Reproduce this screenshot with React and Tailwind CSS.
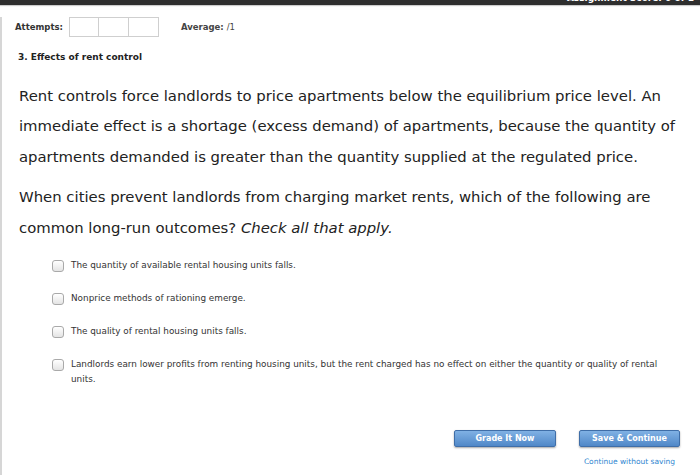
import { useState } from 'react'

const options = [
  'The quantity of available rental housing units falls.',
  'Nonprice methods of rationing emerge.',
  'The quality of rental housing units falls.',
  'Landlords earn lower profits from renting housing units, but the rent charged has no effect on either the quantity or quality of rental units.',
]

const btn = "h-[17px] rounded-[2px] border border-[#3f6ea8] bg-gradient-to-b from-[#80b1e4] to-[#5088c8] text-white text-[8px] font-bold shadow-[0_1px_2px_rgba(0,0,0,0.35)] flex items-center justify-center"

function Option({ text, checked, onToggle }) {
  return (
    <label className="flex items-start gap-[7px] cursor-pointer">
      <span
        onClick={onToggle}
        className="mt-[2px] w-[12px] h-[12px] shrink-0 rounded-[3px] border border-[#a9a9a9] bg-gradient-to-b from-white to-[#e4e4e4] flex items-center justify-center text-[9px] leading-none text-[#333]"
      >
        {checked ? '✓' : ''}
      </span>
      <span className="text-[8.85px] leading-[15px] text-[#333]">{text}</span>
    </label>
  )
}

export default function App() {
  const [checked, setChecked] = useState([false, false, false, false])
  const toggle = i => setChecked(c => c.map((v, j) => (j === i ? !v : v)))

  return (
    <div className="w-[700px] h-[475px] bg-white overflow-hidden font-['DejaVu_Sans',Verdana,sans-serif]">
      {/* top strip, mostly scrolled off */}
      <div className="h-[5px] bg-[#2e2e2e] flex justify-end overflow-hidden shadow-[0_1px_1px_rgba(0,0,0,0.2)]">
        <span className="text-white text-[9px] font-bold pr-[6px] -mt-[8px] leading-[12px]">Assignment Score: 0 of 1</span>
      </div>

      <div className="h-[470px] border-l-2 border-[#d6d6d6] pl-[13px] pr-[10px]">
        {/* attempts row */}
        <div className="flex items-center h-[20px] mt-[12px]">
          <span className="text-[8.5px] font-bold text-[#333]">Attempts:</span>
          <div className="flex ml-[6px]">
            <div className="w-[30px] h-[20px] border border-[#cfcfcf]" />
            <div className="w-[30px] h-[20px] border border-l-0 border-[#cfcfcf]" />
            <div className="w-[30px] h-[20px] border border-l-0 border-[#cfcfcf]" />
          </div>
          <span className="ml-[22px] text-[8.5px] font-bold text-[#444]">
            Average: <span className="font-normal">/1</span>
          </span>
        </div>

        <div className="mt-[14px] ml-[3px] text-[9px] font-bold text-[#222]">3. Effects of rent control</div>

        <div className="ml-[4px] text-[14.85px] leading-[30.5px] text-[#222]">
          <p className="mt-[16px]">
            Rent controls force landlords to price apartments below the equilibrium price level. An immediate effect is a
            shortage (excess demand) of apartments, because the quantity of apartments demanded is greater than the
            quantity supplied at the regulated price.
          </p>
          <p className="mt-[10px]">
            When cities prevent landlords from charging market rents, which of the following are common long-run
            outcomes? <i>Check all that apply.</i>
          </p>
        </div>

        <div className="ml-[37px] mt-[15px] w-[620px] flex flex-col gap-[18px]">
          {options.map((o, i) => (
            <Option key={i} text={o} checked={checked[i]} onToggle={() => toggle(i)} />
          ))}
        </div>

        <div className="flex justify-end gap-[23px] mt-[43px] pr-[10px]">
          <button className={`${btn} w-[102px]`}>Grade It Now</button>
          <div className="flex flex-col items-center">
            <button className={`${btn} w-[101px]`}>Save &amp; Continue</button>
            <a className="mt-[9px] text-[7.5px] text-[#2f86d0]">Continue without saving</a>
          </div>
        </div>
      </div>
    </div>
  )
}
